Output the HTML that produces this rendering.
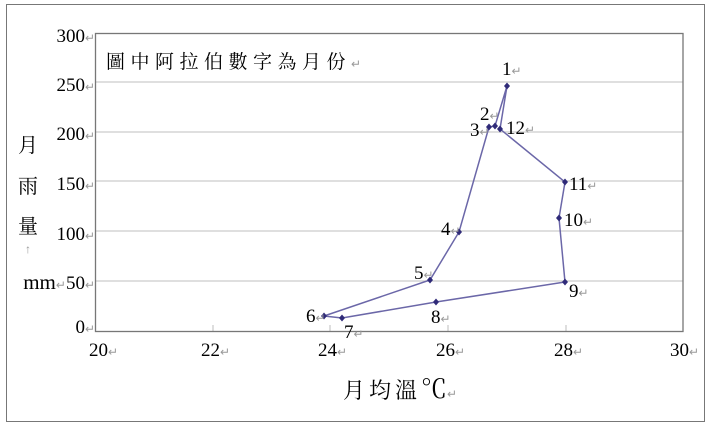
<!DOCTYPE html>
<html><head><meta charset="utf-8"><style>
html,body{margin:0;padding:0;background:#fff;}
svg{display:block;}
text{font-family:"Liberation Serif","Noto Serif CJK SC",serif;fill:#000;}
.a{fill:#999;font-size:12px;}
</style></head><body>
<svg width="709" height="426" viewBox="0 0 709 426">
<rect x="6.5" y="4.5" width="698" height="417" fill="#fff" stroke="#777" stroke-width="1"/>
<g stroke="#ccc" stroke-width="1.3">
<line x1="95" y1="82" x2="683" y2="82"/><line x1="95" y1="132" x2="683" y2="132"/>
<line x1="95" y1="181" x2="683" y2="181"/><line x1="95" y1="231" x2="683" y2="231"/>
<line x1="95" y1="281" x2="683" y2="281"/>
<line x1="213" y1="325" x2="213" y2="331"/><line x1="330" y1="325" x2="330" y2="331"/><line x1="448" y1="325" x2="448" y2="331"/><line x1="566" y1="325" x2="566" y2="331"/>
</g>
<rect x="95.5" y="33.5" width="587.5" height="298" fill="none" stroke="#777" stroke-width="1.3"/>
<g font-size="19" text-anchor="end">
<text x="95" y="42">300<tspan class="a">↵</tspan></text>
<text x="95" y="91">250<tspan class="a">↵</tspan></text>
<text x="95" y="140">200<tspan class="a">↵</tspan></text>
<text x="95" y="190">150<tspan class="a">↵</tspan></text>
<text x="95" y="240">100<tspan class="a">↵</tspan></text>
<text x="95" y="289"><tspan font-size="21">mm</tspan><tspan class="a">↵</tspan>50<tspan class="a">↵</tspan></text>
<text x="95" y="333">0<tspan class="a">↵</tspan></text>
</g>
<g font-size="19">
<text x="89" y="356">20<tspan class="a">↵</tspan></text>
<text x="201" y="356">22<tspan class="a">↵</tspan></text>
<text x="318" y="356">24<tspan class="a">↵</tspan></text>
<text x="436" y="356">26<tspan class="a">↵</tspan></text>
<text x="554" y="356">28<tspan class="a">↵</tspan></text>
<text x="670" y="356">30<tspan class="a">↵</tspan></text>
</g>
<text x="106" y="68" font-size="19" letter-spacing="5.5">圖中阿拉伯數字為月份<tspan class="a">↵</tspan></text>
<text x="18" y="152" font-size="20">月</text>
<text x="18" y="193" font-size="20">雨</text>
<text x="18" y="233" font-size="20">量</text>
<text x="25" y="253" class="a" font-size="14">↑</text>
<text x="343" y="398" font-size="22" letter-spacing="4">月均溫<tspan font-size="26" letter-spacing="0">℃</tspan><tspan class="a">↵</tspan></text>
<polyline fill="none" stroke="#6b67a8" stroke-width="1.5" points="507,86 495,126 489,127 459,232 430,280 324,316 342,318 436,302 565,282 559,218 565,182 500,129 507,86"/>
<g fill="#2f2a78">
<path d="M507 82.5l3 3.5-3 3.5-3-3.5z M495 122.5l3 3.5-3 3.5-3-3.5z M489 123.5l3 3.5-3 3.5-3-3.5z M500 125.5l3 3.5-3 3.5-3-3.5z M565 178.5l3 3.5-3 3.5-3-3.5z M559 214.5l3 3.5-3 3.5-3-3.5z M459 228.5l3 3.5-3 3.5-3-3.5z M430 276.5l3 3.5-3 3.5-3-3.5z M565 278.5l3 3.5-3 3.5-3-3.5z M436 298.5l3 3.5-3 3.5-3-3.5z M324 312.5l3 3.5-3 3.5-3-3.5z M342 314.5l3 3.5-3 3.5-3-3.5z"/>
</g>
<g font-size="19">
<text x="502" y="75">1<tspan class="a">↵</tspan></text>
<text x="480" y="120">2<tspan class="a">↵</tspan></text>
<text x="470" y="136">3<tspan class="a">↵</tspan></text>
<text x="506" y="134">12<tspan class="a">↵</tspan></text>
<text x="569" y="190">11<tspan class="a">↵</tspan></text>
<text x="564" y="226">10<tspan class="a">↵</tspan></text>
<text x="441" y="235">4<tspan class="a">↵</tspan></text>
<text x="414" y="279">5<tspan class="a">↵</tspan></text>
<text x="569" y="297">9<tspan class="a">↵</tspan></text>
<text x="431" y="323">8<tspan class="a">↵</tspan></text>
<text x="306" y="322">6<tspan class="a">↵</tspan></text>
<text x="344" y="338">7<tspan class="a">↵</tspan></text>
</g>
</svg>
</body></html>
